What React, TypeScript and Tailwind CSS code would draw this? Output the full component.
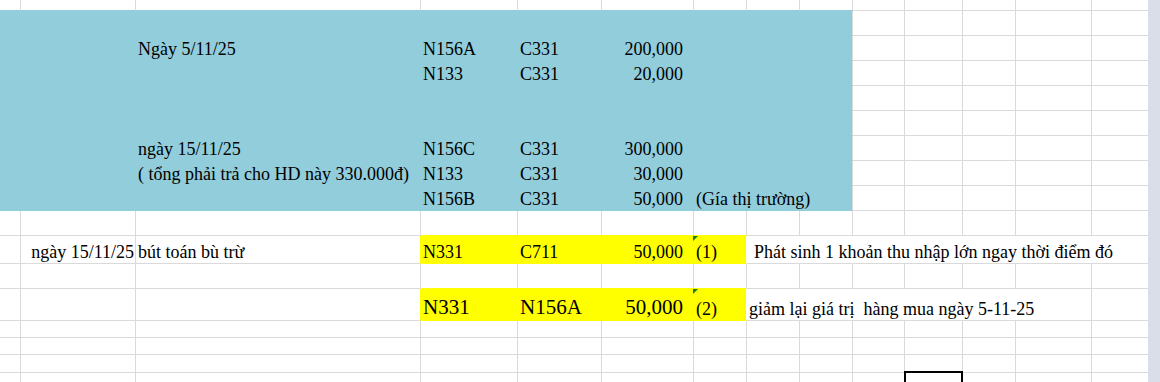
import React from 'react';

/* Excel-like sheet: fixed column widths and row heights, text bottom-aligned like Excel. */

type Cell = {
  c: number;
  text: string;
  span?: number;
  right?: boolean;
  big?: boolean;
  tri?: boolean;
  indent?: boolean;
};

const data: Record<number, Cell[]> = {
  2: [
    { c: 2, text: 'Ngày 5/11/25' },
    { c: 3, text: 'N156A' },
    { c: 4, text: 'C331' },
    { c: 5, text: '200,000', right: true },
  ],
  3: [
    { c: 3, text: 'N133' },
    { c: 4, text: 'C331' },
    { c: 5, text: '20,000', right: true },
  ],
  6: [
    { c: 2, text: 'ngày 15/11/25' },
    { c: 3, text: 'N156C' },
    { c: 4, text: 'C331' },
    { c: 5, text: '300,000', right: true },
  ],
  7: [
    { c: 2, text: '( tổng phải trả cho HD này 330.000đ)' },
    { c: 3, text: 'N133' },
    { c: 4, text: 'C331' },
    { c: 5, text: '30,000', right: true },
  ],
  8: [
    { c: 3, text: 'N156B' },
    { c: 4, text: 'C331' },
    { c: 5, text: '50,000', right: true },
    { c: 6, span: 3, text: '(Gía thị trường)' },
  ],
  10: [
    { c: 1, text: 'ngày 15/11/25', right: true },
    { c: 2, text: 'bút toán bù trừ' },
    { c: 3, text: 'N331' },
    { c: 4, text: 'C711' },
    { c: 5, text: '50,000', right: true },
    { c: 6, text: '(1)', tri: true },
    { c: 7, span: 7, text: 'Phát sinh 1 khoản thu nhập lớn ngay thời điểm đó', indent: true },
  ],
  12: [
    { c: 3, text: 'N331', big: true },
    { c: 4, text: 'N156A', big: true },
    { c: 5, text: '50,000', big: true, right: true },
    { c: 6, text: '(2)', tri: true },
    { c: 7, span: 6, text: 'giảm lại giá trị  hàng mua ngày 5-11-25' },
  ],
};

const spanClass: Record<number, string> = {
  1: 'col-span-1',
  3: 'col-span-3',
  6: 'col-span-6',
  7: 'col-span-7',
};

const ROW_COUNT = 17;
const COL_COUNT = 14;

function isBlue(r: number, c: number) {
  return r >= 1 && r <= 8 && c <= 8;
}

function isYellow(r: number, c: number) {
  return (r === 10 || r === 12) && c >= 3 && c <= 6;
}

function bgClass(r: number, c: number) {
  if (isBlue(r, c)) return 'bg-[#92cddc]';
  if (isYellow(r, c)) return 'bg-[#ffff00]';
  return 'bg-white';
}

function rightBorder(r: number, end: number) {
  if (end === COL_COUNT - 1) return 'border-r-0';
  if (r >= 1 && r <= 8 && end <= 7) return 'border-r border-r-[#92cddc]';
  if (r === 10 || r === 12) {
    if (end >= 2 && end <= 5) return 'border-r border-r-[#ffff00]';
    if (end === 6) return 'border-r border-r-white';
  }
  return 'border-r border-r-[#dadada]';
}

function bottomBorder(r: number, c: number) {
  if (r === 0 && c <= 8) return 'border-b border-b-[#92cddc]';
  if (isBlue(r, c)) return 'border-b border-b-[#92cddc]';
  if ((r === 9 || r === 11) && c >= 3 && c <= 6) return 'border-b border-b-[#ffff00]';
  if (isYellow(r, c)) return 'border-b border-b-[#ffff00]';
  return 'border-b border-b-[#dadada]';
}

function renderRow(r: number) {
  const cells = data[r] || [];
  const out: React.ReactNode[] = [];
  let c = 0;
  while (c < COL_COUNT) {
    const cell = cells.find((x) => x.c === c);
    const span = cell?.span ?? 1;
    const end = c + span - 1;
    const base = `relative flex items-end min-w-0 pb-[1px] ${spanClass[span]} ${bgClass(r, c)} ${rightBorder(r, end)} ${bottomBorder(r, c)}`;
    if (!cell) {
      out.push(
        <div key={`${r}-${c}`} className={base}>
          {r === 16 && c === 10 ? (
            <div className="absolute -left-px -top-[2px] w-[59px] h-[20px] border-2 border-black" />
          ) : null}
        </div>
      );
    } else {
      out.push(
        <div
          key={`${r}-${c}`}
          className={`${base} ${cell.right ? 'justify-end' : 'justify-start'} ${
            c === 5 ? 'pr-[10px]' : cell.right ? 'pr-[1px]' : cell.indent ? 'pl-[7px]' : 'pl-[2px]'
          }`}
        >
          {cell.tri ? (
            <span className="absolute -left-px top-0 w-[5px] h-[5px] bg-[#1b7d1b] [clip-path:polygon(0_0,100%_0,0_100%)]" />
          ) : null}
          <span
            className={`whitespace-pre text-black ${
              cell.big ? 'text-[21px] leading-[24px]' : 'text-[18px] leading-[20px]'
            }`}
          >
            {cell.text}
          </span>
        </div>
      );
    }
    c += span;
  }
  return out;
}

export default function App() {
  const rows = Array.from({ length: ROW_COUNT }, (_, r) => r);
  return (
    <div className="flex w-[1160px] h-[382px] overflow-hidden bg-white font-['Liberation_Serif','Times_New_Roman',serif]">
      <div className="grid w-[1148px] shrink-0 grid-cols-[21px_115px_285px_97px_84px_92px_53px_53px_53px_52px_58px_53px_76px_56px] grid-rows-[11px_25px_25px_25px_25px_25px_25px_25px_25px_25px_28px_25px_32px_17px_17px_18px_17px]">
        {rows.map((r) => renderRow(r))}
      </div>
      <div className="w-[12px] h-full bg-[#dadee8]" />
    </div>
  );
}
